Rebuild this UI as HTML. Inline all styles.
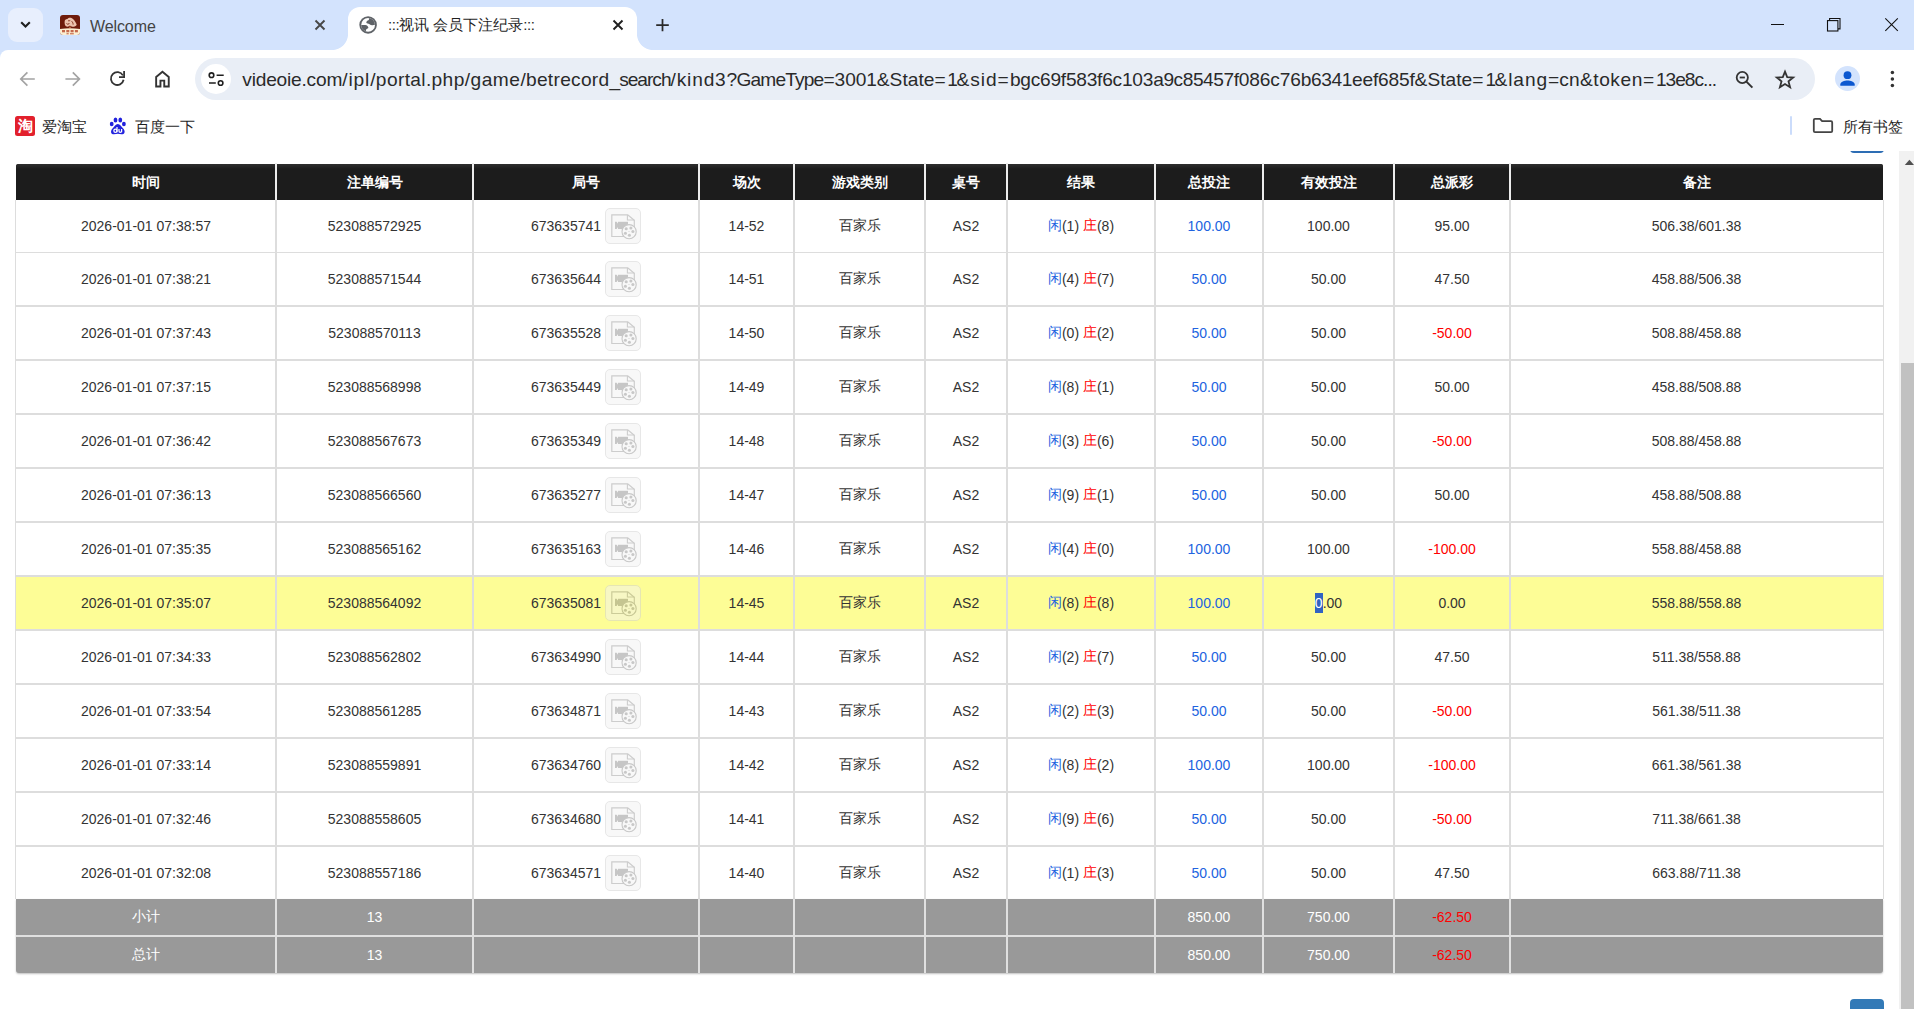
<!DOCTYPE html><html><head><meta charset="utf-8"><title>::视讯 会员下注纪录::</title><style>
*{box-sizing:border-box}
html,body{margin:0;padding:0}
body{width:1914px;height:1009px;position:relative;overflow:hidden;background:#fff;font-family:"Liberation Sans",sans-serif;color:#333}
.a{position:absolute}
.c{position:absolute;display:flex;align-items:center;justify-content:center;white-space:nowrap}
.hd{color:#fff;font-weight:bold;font-size:14px;padding-top:2px}
.td{font-size:14px;color:#333}
.bl{color:#2163e0}
.rd{color:#ff0000}
.ft{color:#fff;font-size:14px}
.vl{position:absolute;width:2px;background:#dddddd}
.hl{position:absolute;height:2px;background:#dddddd}
.vid{display:inline-block;width:36px;height:36px;border:1px solid #d0d0d0;border-radius:5px;background:#f2f2f2;opacity:.5;margin-left:4px;position:relative}
.vid svg{position:absolute;left:0;top:0}
</style></head><body>
<div class="a" style="left:0;top:0;width:1914px;height:151px;background:#fff;z-index:5"></div>
<div class="a" style="left:0;top:0;width:1914px;height:60px;background:#d3e3fd;z-index:5"></div>
<div class="a" style="left:0;top:50px;width:1914px;height:101px;background:#fff;border-top-left-radius:8px;z-index:5"></div>
<div id="chrome" style="position:absolute;left:0;top:0;width:1914px;height:151px;z-index:6">
<!-- tab search button -->
<div class="a" style="left:8px;top:8px;width:35px;height:34px;border-radius:9px;background:#e8effd"></div>
<svg class="a" style="left:8px;top:8px" width="35" height="34" viewBox="0 0 35 34"><path d="M13.2 14.2l4.3 4.3 4.3-4.3" fill="none" stroke="#1f1f1f" stroke-width="2.1"/></svg>
<!-- welcome tab -->
<svg class="a" style="left:60px;top:15px" width="20" height="20" viewBox="0 0 20 20"><defs><clipPath id="fc"><rect x="0" y="0" width="20" height="20" rx="3"/></clipPath></defs><g clip-path="url(#fc)"><rect width="20" height="20" fill="#6e1b0b"/><path d="M0 14Q10 12.6 20 14V20H0z" fill="#fcefd2"/><g fill="#c4694c"><rect x="2" y="15" width="3" height="2.3"/><rect x="6.3" y="15" width="3" height="2.3"/><rect x="10.6" y="15" width="3" height="2.3"/><rect x="14.9" y="15" width="3" height="2.3"/><rect x="6.5" y="18.2" width="2.2" height="1.1"/><rect x="10" y="18.2" width="3.8" height="1.1"/></g><path d="M4.6 7.2C4.4 5.2 6 4 7.4 4.1 8.3 2.6 10.2 2.3 11.5 3.1 13.5 4.2 15.6 6.8 16.7 9.6 16.3 11.2 14.6 12 13 11.7 11.7 12 10.6 11.3 10 10.6 9 11.6 7.2 12 6 11.2 4.8 10.4 4.6 8.6 4.6 7.2z" fill="#ecc2ad"/><path d="M6.5 8.5C7.5 9.8 9 9.2 9.4 8M8 5.5c.8.6 1.8.4 2.2-.3M11.6 6.2c1 .9 1.6 2.2 1.5 3.4" fill="none" stroke="#7a2612" stroke-width=".9"/><path d="M9.2 13.3L10 10.8 10.8 13.3z" fill="#e49a6c"/></g></svg>
<div class="a" style="left:90px;top:16.5px;font-size:16px;line-height:20px;color:#444;letter-spacing:-0.1px">Welcome</div>
<svg class="a" style="left:312px;top:17px" width="16" height="16" viewBox="0 0 16 16"><path d="M3.5 3.5l9 9M12.5 3.5l-9 9" stroke="#474747" stroke-width="1.9"/></svg>
<!-- active tab -->
<div class="a" style="left:348px;top:7px;width:289px;height:44px;background:#fff;border-radius:12px 12px 0 0"></div>
<div class="a" style="left:332px;top:34px;width:16px;height:16px;background:radial-gradient(circle at 0 0,#d3e3fd 15.6px,#fff 16.4px)"></div>
<div class="a" style="left:637px;top:34px;width:16px;height:16px;background:radial-gradient(circle at 100% 0,#d3e3fd 15.6px,#fff 16.4px)"></div>
<svg class="a" style="left:359px;top:16px" width="18" height="18" viewBox="0 0 18 18"><defs><clipPath id="gc"><circle cx="9.1" cy="8.9" r="6.9"/></clipPath></defs><circle cx="9.1" cy="8.9" r="8.75" fill="#5f6368"/><circle cx="9.1" cy="8.9" r="6.9" fill="#fff"/><g clip-path="url(#gc)" fill="#5f6368"><path d="M9.9 0V4C8.2 4.5 7.3 5.5 7.3 6.8 7.8 7.5 9.4 7.6 10.5 8.2 11.5 9 12.5 9.5 13.5 9.3L17 8.5V0z"/><path d="M0 8.9H6.3C8 9.1 9.4 10.5 9.4 12 8.3 12.5 7 13 6.9 14.6L7.1 18H0z"/></g></svg>
<div class="a" style="left:388px;top:14px;font-size:15px;line-height:22px;color:#1f1f1f;white-space:nowrap"><span style="letter-spacing:-0.45px">:::</span>视讯 会员下注纪录<span style="letter-spacing:-0.45px">:::</span></div>
<svg class="a" style="left:609.5px;top:17px" width="16" height="16" viewBox="0 0 16 16"><path d="M3.5 3.5l9 9M12.5 3.5l-9 9" stroke="#1f1f1f" stroke-width="1.9"/></svg>
<!-- new tab + -->
<svg class="a" style="left:652px;top:15px" width="20" height="20" viewBox="0 0 20 20"><path d="M10.5 4v12.3M4.2 10h12.6" stroke="#2a2a2a" stroke-width="1.75"/></svg>
<!-- window controls -->
<div class="a" style="left:1771px;top:24px;width:13px;height:1px;background:#111"></div>
<svg class="a" style="left:1825px;top:16px" width="18" height="18" viewBox="0 0 18 18"><path d="M4.6 4.5V2.5h10.4v10.4h-2" fill="none" stroke="#111" stroke-width="1.1"/><rect x="2.5" y="4.6" width="10.4" height="10.4" fill="none" stroke="#111" stroke-width="1.1"/></svg>
<svg class="a" style="left:1883px;top:16px" width="18" height="18" viewBox="0 0 18 18"><path d="M2.3 2.3l12.5 12.5M14.8 2.3l-12.5 12.5" stroke="#111" stroke-width="1.1"/></svg>
<!-- toolbar -->
<svg class="a" style="left:17px;top:68px" width="22" height="22" viewBox="0 0 22 22"><path d="M17.8 11H4.5M10.4 4.4L3.8 11l6.6 6.6" fill="none" stroke="#a3a3a3" stroke-width="1.7"/></svg>
<svg class="a" style="left:62px;top:68px" width="22" height="22" viewBox="0 0 22 22"><path d="M3.4 11h13.4M10.8 4.4l6.6 6.6-6.6 6.6" fill="none" stroke="#a3a3a3" stroke-width="1.7"/></svg>
<svg class="a" style="left:107px;top:68px" width="22" height="22" viewBox="0 0 22 22"><path d="M15.9 7.4A6.4 6.4 0 1 0 16.6 11.8" fill="none" stroke="#333" stroke-width="1.8"/><path d="M17.1 3.1V9.1H12" fill="none" stroke="#333" stroke-width="1.8" stroke-linejoin="miter"/></svg>
<svg class="a" style="left:152px;top:68px" width="22" height="22" viewBox="0 0 22 22"><path d="M4.15 18.45V8.9L10.45 3.8l6.3 5.1v9.55h-4.5V12.6H8.45v5.85z" fill="none" stroke="#333" stroke-width="1.9" stroke-linejoin="miter"/></svg>
<!-- omnibox -->
<div class="a" style="left:195px;top:58px;width:1620px;height:42px;border-radius:21px;background:#e9eef6"></div>
<div class="a" style="left:201px;top:64px;width:30px;height:30px;border-radius:15px;background:#fff"></div>
<svg class="a" style="left:206px;top:69px" width="20" height="20" viewBox="0 0 20 20"><circle cx="5.5" cy="6.2" r="2.3" fill="none" stroke="#1f1f1f" stroke-width="1.6"/><path d="M10.6 6.2h7.1M3 14h6.8" stroke="#1f1f1f" stroke-width="1.6"/><circle cx="14.6" cy="14" r="2.3" fill="none" stroke="#1f1f1f" stroke-width="1.6"/></svg>
<div class="a" style="left:0;top:68px;width:1914px;height:24px;font-size:19.15px;line-height:24px;color:#2a2a2a;white-space:nowrap"><span style="position:absolute;left:242.30px;letter-spacing:-0.208px">videoie.com</span><span style="position:absolute;left:342.20px;letter-spacing:0.880px">/ipl</span><span style="position:absolute;left:370.20px;letter-spacing:0.364px">/portal.php</span><span style="position:absolute;left:464.70px;letter-spacing:0.495px">/game</span><span style="position:absolute;left:520.40px;letter-spacing:0.288px">/betrecord</span><span style="position:absolute;left:609.51px;letter-spacing:-1.005px">_search</span><span style="position:absolute;left:670.60px;letter-spacing:0.816px">/kind3</span><span style="position:absolute;left:726.60px;letter-spacing:-0.824px">?GameType</span><span style="position:absolute;left:823.50px;letter-spacing:-0.097px">=3001</span><span style="position:absolute;left:876.80px;letter-spacing:0.035px">&amp;State</span><span style="position:absolute;left:934.50px;letter-spacing:1.617px">=</span><span style="position:absolute;left:947.30px;letter-spacing:-1.350px">1</span><span style="position:absolute;left:956.60px;letter-spacing:0.912px">&amp;sid</span><span style="position:absolute;left:997.50px;letter-spacing:1.217px">=</span><span style="position:absolute;left:1009.90px;letter-spacing:-0.243px">bgc69f583f6c103</span><span style="position:absolute;left:1153.20px;letter-spacing:-0.453px">a9c85457</span><span style="position:absolute;left:1233.70px;letter-spacing:-0.150px">f086c76</span><span style="position:absolute;left:1300.80px;letter-spacing:-0.410px">b6341</span><span style="position:absolute;left:1352.00px;letter-spacing:-0.185px">eef685f</span><span style="position:absolute;left:1414.60px;letter-spacing:0.035px">&amp;State</span><span style="position:absolute;left:1472.30px;letter-spacing:2.117px">=</span><span style="position:absolute;left:1485.60px;letter-spacing:-1.750px">1</span><span style="position:absolute;left:1494.50px;letter-spacing:0.904px">&amp;lang</span><span style="position:absolute;left:1548.00px;letter-spacing:0.164px">=cn</span><span style="position:absolute;left:1579.90px;letter-spacing:0.580px">&amp;token</span><span style="position:absolute;left:1643.00px;letter-spacing:1.717px">=</span><span style="position:absolute;left:1655.90px;letter-spacing:-0.991px">13e8c...</span></div>
<svg class="a" style="left:1733px;top:68px" width="22" height="22" viewBox="0 0 22 22"><circle cx="9.3" cy="9.5" r="5.6" fill="none" stroke="#333" stroke-width="1.8"/><path d="M6.7 9.5h5.2" stroke="#333" stroke-width="1.8"/><path d="M13.4 13.6l6 6" stroke="#333" stroke-width="2"/></svg>
<svg class="a" style="left:1774px;top:68px" width="22" height="22" viewBox="0 0 22 22"><path d="M11 3.6l2.2 5.6 6 .3-4.7 3.9 1.6 5.9L11 16l-5.1 3.3 1.6-5.9-4.7-3.9 6-.3z" fill="none" stroke="#333" stroke-width="1.8" stroke-linejoin="miter"/></svg>
<div class="a" style="left:1835px;top:65.5px;width:25px;height:25px;border-radius:50%;background:#d3e3fd"></div>
<svg class="a" style="left:1835px;top:65.5px" width="25" height="25" viewBox="0 0 25 25"><circle cx="12.5" cy="9.2" r="3.9" fill="#0b57d0"/><path d="M5.3 19.8v-1.3c0-2.6 4.3-4 7.2-4s7.2 1.4 7.2 4v1.3z" fill="#0b57d0"/></svg>
<svg class="a" style="left:1882px;top:68px" width="20" height="22" viewBox="0 0 20 22"><circle cx="10.4" cy="4.6" r="1.75" fill="#333"/><circle cx="10.4" cy="11.1" r="1.75" fill="#333"/><circle cx="10.4" cy="17.6" r="1.75" fill="#333"/></svg>
<!-- bookmarks bar -->
<div class="a" style="left:15px;top:116px;width:20px;height:20px;border-radius:2.5px;background:#e2202c;color:#fff;font-weight:bold;font-size:15px;line-height:20px;text-align:center;overflow:hidden">淘</div>
<div class="a" style="left:42px;top:117px;font-size:15px;line-height:20px;color:#1f1f1f">爱淘宝</div>
<svg class="a" style="left:108px;top:116px" width="20" height="20" viewBox="0 0 20 20"><g fill="#2222dd"><ellipse cx="7.5" cy="4" rx="1.9" ry="2.5"/><ellipse cx="12.3" cy="4" rx="1.9" ry="2.5"/><ellipse cx="3.7" cy="8" rx="1.9" ry="2.3"/><ellipse cx="15.9" cy="8" rx="1.9" ry="2.3"/><path d="M9.8 8C7.5 8 6.5 10.5 4.5 12.5 2.5 14.5 2.5 17.8 5 18.2 7 18.5 8.5 17.8 9.8 17.8 11.2 17.8 12.6 18.5 14.6 18.2 17.2 17.8 17.2 14.5 15.2 12.5 13.2 10.5 12.1 8 9.8 8z"/></g><g fill="none" stroke="#fff" stroke-width="1.25"><circle cx="7.4" cy="14.7" r="1.55"/><path d="M9 11v5.2M11 12.9v2c0 1 .6 1.4 1.3 1.4s1.3-.4 1.3-1.4v-2M13.6 12.9v3.3"/></g></svg>
<div class="a" style="left:135px;top:117px;font-size:15px;line-height:20px;color:#1f1f1f">百度一下</div>
<div class="a" style="left:1790px;top:116px;width:2px;height:19px;background:#cbdcfb;border-radius:1px"></div>
<svg class="a" style="left:1812px;top:116px" width="22" height="19" viewBox="0 0 22 19"><path d="M1.8 4.1c0-.7.5-1.2 1.2-1.2h5l2.1 2.3h8.9c.7 0 1.2.5 1.2 1.2v8.6c0 .7-.5 1.2-1.2 1.2H3c-.7 0-1.2-.5-1.2-1.2z" fill="none" stroke="#444" stroke-width="1.8"/></svg>
<div class="a" style="left:1843px;top:117px;font-size:15px;line-height:20px;color:#1f1f1f">所有书签</div>
</div>

<div class="a" style="left:16px;top:164px;width:1867px;height:36px;background:#1c1c1c;border-radius:3px 3px 0 0;"></div>
<div class="a" style="left:16px;top:164px;width:1867px;height:5px;background:linear-gradient(#2e2e2e,#1c1c1c);border-radius:2px 2px 0 0"></div>
<div class="c hd" style="left:16px;top:164px;width:260px;height:36px">时间</div>
<div class="c hd" style="left:276px;top:164px;width:197px;height:36px">注单编号</div>
<div class="c hd" style="left:473px;top:164px;width:226px;height:36px">局号</div>
<div class="c hd" style="left:699px;top:164px;width:95px;height:36px">场次</div>
<div class="c hd" style="left:794px;top:164px;width:131px;height:36px">游戏类别</div>
<div class="c hd" style="left:925px;top:164px;width:82px;height:36px">桌号</div>
<div class="c hd" style="left:1007px;top:164px;width:148px;height:36px">结果</div>
<div class="c hd" style="left:1155px;top:164px;width:108px;height:36px">总投注</div>
<div class="c hd" style="left:1263px;top:164px;width:131px;height:36px">有效投注</div>
<div class="c hd" style="left:1394px;top:164px;width:116px;height:36px">总派彩</div>
<div class="c hd" style="left:1510px;top:164px;width:373px;height:36px">备注</div>
<div class="vl" style="left:275px;top:163px;height:37px;background:#ececec"></div>
<div class="vl" style="left:472px;top:163px;height:37px;background:#ececec"></div>
<div class="vl" style="left:698px;top:163px;height:37px;background:#ececec"></div>
<div class="vl" style="left:793px;top:163px;height:37px;background:#ececec"></div>
<div class="vl" style="left:924px;top:163px;height:37px;background:#ececec"></div>
<div class="vl" style="left:1006px;top:163px;height:37px;background:#ececec"></div>
<div class="vl" style="left:1154px;top:163px;height:37px;background:#ececec"></div>
<div class="vl" style="left:1262px;top:163px;height:37px;background:#ececec"></div>
<div class="vl" style="left:1393px;top:163px;height:37px;background:#ececec"></div>
<div class="vl" style="left:1509px;top:163px;height:37px;background:#ececec"></div>
<div class="c td" style="left:16px;top:200px;width:260px;height:52px">2026-01-01 07:38:57</div>
<div class="c td" style="left:276px;top:200px;width:197px;height:52px">523088572925</div>
<div class="c td" style="left:473px;top:200px;width:226px;height:52px">673635741<span class="vid"><svg width="34" height="34" viewBox="0 0 34 34"><path d="M21.6 5.8H5.8v21.7h13M21.6 5.8l6.7 5.5v10" fill="none" stroke="#9c9c9c" stroke-width="1.2"/><path d="M21.4 5.8v5.2h6.9" fill="none" stroke="#9c9c9c" stroke-width="1.1"/><rect x="12" y="12.8" width="10" height="7.2" fill="#8e8e8e"/><path d="M9 12.8h1.6l1.6 2.3v2.6l-1.6 2.3H9z" fill="#8e8e8e"/><circle cx="23.1" cy="22.7" r="7.1" fill="#f2f2f2" stroke="#929292" stroke-width="1.1"/><g fill="#939393"><circle cx="20.2" cy="19.7" r="1.55"/><circle cx="24.9" cy="19" r="1.55"/><circle cx="26.9" cy="22.5" r="1.55"/><circle cx="19.4" cy="24.2" r="1.55"/><circle cx="23.4" cy="26.2" r="1.55"/><circle cx="23" cy="22.6" r=".5"/></g></svg></span></div>
<div class="c td" style="left:699px;top:200px;width:95px;height:52px">14-52</div>
<div class="c td" style="left:794px;top:200px;width:131px;height:52px">百家乐</div>
<div class="c td" style="left:925px;top:200px;width:82px;height:52px">AS2</div>
<div class="c td" style="left:1007px;top:200px;width:148px;height:52px"><span class="bl">闲</span>(1)&nbsp;<span class="rd">庄</span>(8)</div>
<div class="c td" style="left:1155px;top:200px;width:108px;height:52px"><span class="bl">100.00</span></div>
<div class="c td" style="left:1263px;top:200px;width:131px;height:52px">100.00</div>
<div class="c td" style="left:1394px;top:200px;width:116px;height:52px">95.00</div>
<div class="c td" style="left:1510px;top:200px;width:373px;height:52px">506.38/601.38</div>
<div class="c td" style="left:16px;top:252px;width:260px;height:54px">2026-01-01 07:38:21</div>
<div class="c td" style="left:276px;top:252px;width:197px;height:54px">523088571544</div>
<div class="c td" style="left:473px;top:252px;width:226px;height:54px">673635644<span class="vid"><svg width="34" height="34" viewBox="0 0 34 34"><path d="M21.6 5.8H5.8v21.7h13M21.6 5.8l6.7 5.5v10" fill="none" stroke="#9c9c9c" stroke-width="1.2"/><path d="M21.4 5.8v5.2h6.9" fill="none" stroke="#9c9c9c" stroke-width="1.1"/><rect x="12" y="12.8" width="10" height="7.2" fill="#8e8e8e"/><path d="M9 12.8h1.6l1.6 2.3v2.6l-1.6 2.3H9z" fill="#8e8e8e"/><circle cx="23.1" cy="22.7" r="7.1" fill="#f2f2f2" stroke="#929292" stroke-width="1.1"/><g fill="#939393"><circle cx="20.2" cy="19.7" r="1.55"/><circle cx="24.9" cy="19" r="1.55"/><circle cx="26.9" cy="22.5" r="1.55"/><circle cx="19.4" cy="24.2" r="1.55"/><circle cx="23.4" cy="26.2" r="1.55"/><circle cx="23" cy="22.6" r=".5"/></g></svg></span></div>
<div class="c td" style="left:699px;top:252px;width:95px;height:54px">14-51</div>
<div class="c td" style="left:794px;top:252px;width:131px;height:54px">百家乐</div>
<div class="c td" style="left:925px;top:252px;width:82px;height:54px">AS2</div>
<div class="c td" style="left:1007px;top:252px;width:148px;height:54px"><span class="bl">闲</span>(4)&nbsp;<span class="rd">庄</span>(7)</div>
<div class="c td" style="left:1155px;top:252px;width:108px;height:54px"><span class="bl">50.00</span></div>
<div class="c td" style="left:1263px;top:252px;width:131px;height:54px">50.00</div>
<div class="c td" style="left:1394px;top:252px;width:116px;height:54px">47.50</div>
<div class="c td" style="left:1510px;top:252px;width:373px;height:54px">458.88/506.38</div>
<div class="c td" style="left:16px;top:306px;width:260px;height:54px">2026-01-01 07:37:43</div>
<div class="c td" style="left:276px;top:306px;width:197px;height:54px">523088570113</div>
<div class="c td" style="left:473px;top:306px;width:226px;height:54px">673635528<span class="vid"><svg width="34" height="34" viewBox="0 0 34 34"><path d="M21.6 5.8H5.8v21.7h13M21.6 5.8l6.7 5.5v10" fill="none" stroke="#9c9c9c" stroke-width="1.2"/><path d="M21.4 5.8v5.2h6.9" fill="none" stroke="#9c9c9c" stroke-width="1.1"/><rect x="12" y="12.8" width="10" height="7.2" fill="#8e8e8e"/><path d="M9 12.8h1.6l1.6 2.3v2.6l-1.6 2.3H9z" fill="#8e8e8e"/><circle cx="23.1" cy="22.7" r="7.1" fill="#f2f2f2" stroke="#929292" stroke-width="1.1"/><g fill="#939393"><circle cx="20.2" cy="19.7" r="1.55"/><circle cx="24.9" cy="19" r="1.55"/><circle cx="26.9" cy="22.5" r="1.55"/><circle cx="19.4" cy="24.2" r="1.55"/><circle cx="23.4" cy="26.2" r="1.55"/><circle cx="23" cy="22.6" r=".5"/></g></svg></span></div>
<div class="c td" style="left:699px;top:306px;width:95px;height:54px">14-50</div>
<div class="c td" style="left:794px;top:306px;width:131px;height:54px">百家乐</div>
<div class="c td" style="left:925px;top:306px;width:82px;height:54px">AS2</div>
<div class="c td" style="left:1007px;top:306px;width:148px;height:54px"><span class="bl">闲</span>(0)&nbsp;<span class="rd">庄</span>(2)</div>
<div class="c td" style="left:1155px;top:306px;width:108px;height:54px"><span class="bl">50.00</span></div>
<div class="c td" style="left:1263px;top:306px;width:131px;height:54px">50.00</div>
<div class="c td" style="left:1394px;top:306px;width:116px;height:54px"><span class="rd">-50.00</span></div>
<div class="c td" style="left:1510px;top:306px;width:373px;height:54px">508.88/458.88</div>
<div class="c td" style="left:16px;top:360px;width:260px;height:54px">2026-01-01 07:37:15</div>
<div class="c td" style="left:276px;top:360px;width:197px;height:54px">523088568998</div>
<div class="c td" style="left:473px;top:360px;width:226px;height:54px">673635449<span class="vid"><svg width="34" height="34" viewBox="0 0 34 34"><path d="M21.6 5.8H5.8v21.7h13M21.6 5.8l6.7 5.5v10" fill="none" stroke="#9c9c9c" stroke-width="1.2"/><path d="M21.4 5.8v5.2h6.9" fill="none" stroke="#9c9c9c" stroke-width="1.1"/><rect x="12" y="12.8" width="10" height="7.2" fill="#8e8e8e"/><path d="M9 12.8h1.6l1.6 2.3v2.6l-1.6 2.3H9z" fill="#8e8e8e"/><circle cx="23.1" cy="22.7" r="7.1" fill="#f2f2f2" stroke="#929292" stroke-width="1.1"/><g fill="#939393"><circle cx="20.2" cy="19.7" r="1.55"/><circle cx="24.9" cy="19" r="1.55"/><circle cx="26.9" cy="22.5" r="1.55"/><circle cx="19.4" cy="24.2" r="1.55"/><circle cx="23.4" cy="26.2" r="1.55"/><circle cx="23" cy="22.6" r=".5"/></g></svg></span></div>
<div class="c td" style="left:699px;top:360px;width:95px;height:54px">14-49</div>
<div class="c td" style="left:794px;top:360px;width:131px;height:54px">百家乐</div>
<div class="c td" style="left:925px;top:360px;width:82px;height:54px">AS2</div>
<div class="c td" style="left:1007px;top:360px;width:148px;height:54px"><span class="bl">闲</span>(8)&nbsp;<span class="rd">庄</span>(1)</div>
<div class="c td" style="left:1155px;top:360px;width:108px;height:54px"><span class="bl">50.00</span></div>
<div class="c td" style="left:1263px;top:360px;width:131px;height:54px">50.00</div>
<div class="c td" style="left:1394px;top:360px;width:116px;height:54px">50.00</div>
<div class="c td" style="left:1510px;top:360px;width:373px;height:54px">458.88/508.88</div>
<div class="c td" style="left:16px;top:414px;width:260px;height:54px">2026-01-01 07:36:42</div>
<div class="c td" style="left:276px;top:414px;width:197px;height:54px">523088567673</div>
<div class="c td" style="left:473px;top:414px;width:226px;height:54px">673635349<span class="vid"><svg width="34" height="34" viewBox="0 0 34 34"><path d="M21.6 5.8H5.8v21.7h13M21.6 5.8l6.7 5.5v10" fill="none" stroke="#9c9c9c" stroke-width="1.2"/><path d="M21.4 5.8v5.2h6.9" fill="none" stroke="#9c9c9c" stroke-width="1.1"/><rect x="12" y="12.8" width="10" height="7.2" fill="#8e8e8e"/><path d="M9 12.8h1.6l1.6 2.3v2.6l-1.6 2.3H9z" fill="#8e8e8e"/><circle cx="23.1" cy="22.7" r="7.1" fill="#f2f2f2" stroke="#929292" stroke-width="1.1"/><g fill="#939393"><circle cx="20.2" cy="19.7" r="1.55"/><circle cx="24.9" cy="19" r="1.55"/><circle cx="26.9" cy="22.5" r="1.55"/><circle cx="19.4" cy="24.2" r="1.55"/><circle cx="23.4" cy="26.2" r="1.55"/><circle cx="23" cy="22.6" r=".5"/></g></svg></span></div>
<div class="c td" style="left:699px;top:414px;width:95px;height:54px">14-48</div>
<div class="c td" style="left:794px;top:414px;width:131px;height:54px">百家乐</div>
<div class="c td" style="left:925px;top:414px;width:82px;height:54px">AS2</div>
<div class="c td" style="left:1007px;top:414px;width:148px;height:54px"><span class="bl">闲</span>(3)&nbsp;<span class="rd">庄</span>(6)</div>
<div class="c td" style="left:1155px;top:414px;width:108px;height:54px"><span class="bl">50.00</span></div>
<div class="c td" style="left:1263px;top:414px;width:131px;height:54px">50.00</div>
<div class="c td" style="left:1394px;top:414px;width:116px;height:54px"><span class="rd">-50.00</span></div>
<div class="c td" style="left:1510px;top:414px;width:373px;height:54px">508.88/458.88</div>
<div class="c td" style="left:16px;top:468px;width:260px;height:54px">2026-01-01 07:36:13</div>
<div class="c td" style="left:276px;top:468px;width:197px;height:54px">523088566560</div>
<div class="c td" style="left:473px;top:468px;width:226px;height:54px">673635277<span class="vid"><svg width="34" height="34" viewBox="0 0 34 34"><path d="M21.6 5.8H5.8v21.7h13M21.6 5.8l6.7 5.5v10" fill="none" stroke="#9c9c9c" stroke-width="1.2"/><path d="M21.4 5.8v5.2h6.9" fill="none" stroke="#9c9c9c" stroke-width="1.1"/><rect x="12" y="12.8" width="10" height="7.2" fill="#8e8e8e"/><path d="M9 12.8h1.6l1.6 2.3v2.6l-1.6 2.3H9z" fill="#8e8e8e"/><circle cx="23.1" cy="22.7" r="7.1" fill="#f2f2f2" stroke="#929292" stroke-width="1.1"/><g fill="#939393"><circle cx="20.2" cy="19.7" r="1.55"/><circle cx="24.9" cy="19" r="1.55"/><circle cx="26.9" cy="22.5" r="1.55"/><circle cx="19.4" cy="24.2" r="1.55"/><circle cx="23.4" cy="26.2" r="1.55"/><circle cx="23" cy="22.6" r=".5"/></g></svg></span></div>
<div class="c td" style="left:699px;top:468px;width:95px;height:54px">14-47</div>
<div class="c td" style="left:794px;top:468px;width:131px;height:54px">百家乐</div>
<div class="c td" style="left:925px;top:468px;width:82px;height:54px">AS2</div>
<div class="c td" style="left:1007px;top:468px;width:148px;height:54px"><span class="bl">闲</span>(9)&nbsp;<span class="rd">庄</span>(1)</div>
<div class="c td" style="left:1155px;top:468px;width:108px;height:54px"><span class="bl">50.00</span></div>
<div class="c td" style="left:1263px;top:468px;width:131px;height:54px">50.00</div>
<div class="c td" style="left:1394px;top:468px;width:116px;height:54px">50.00</div>
<div class="c td" style="left:1510px;top:468px;width:373px;height:54px">458.88/508.88</div>
<div class="c td" style="left:16px;top:522px;width:260px;height:54px">2026-01-01 07:35:35</div>
<div class="c td" style="left:276px;top:522px;width:197px;height:54px">523088565162</div>
<div class="c td" style="left:473px;top:522px;width:226px;height:54px">673635163<span class="vid"><svg width="34" height="34" viewBox="0 0 34 34"><path d="M21.6 5.8H5.8v21.7h13M21.6 5.8l6.7 5.5v10" fill="none" stroke="#9c9c9c" stroke-width="1.2"/><path d="M21.4 5.8v5.2h6.9" fill="none" stroke="#9c9c9c" stroke-width="1.1"/><rect x="12" y="12.8" width="10" height="7.2" fill="#8e8e8e"/><path d="M9 12.8h1.6l1.6 2.3v2.6l-1.6 2.3H9z" fill="#8e8e8e"/><circle cx="23.1" cy="22.7" r="7.1" fill="#f2f2f2" stroke="#929292" stroke-width="1.1"/><g fill="#939393"><circle cx="20.2" cy="19.7" r="1.55"/><circle cx="24.9" cy="19" r="1.55"/><circle cx="26.9" cy="22.5" r="1.55"/><circle cx="19.4" cy="24.2" r="1.55"/><circle cx="23.4" cy="26.2" r="1.55"/><circle cx="23" cy="22.6" r=".5"/></g></svg></span></div>
<div class="c td" style="left:699px;top:522px;width:95px;height:54px">14-46</div>
<div class="c td" style="left:794px;top:522px;width:131px;height:54px">百家乐</div>
<div class="c td" style="left:925px;top:522px;width:82px;height:54px">AS2</div>
<div class="c td" style="left:1007px;top:522px;width:148px;height:54px"><span class="bl">闲</span>(4)&nbsp;<span class="rd">庄</span>(0)</div>
<div class="c td" style="left:1155px;top:522px;width:108px;height:54px"><span class="bl">100.00</span></div>
<div class="c td" style="left:1263px;top:522px;width:131px;height:54px">100.00</div>
<div class="c td" style="left:1394px;top:522px;width:116px;height:54px"><span class="rd">-100.00</span></div>
<div class="c td" style="left:1510px;top:522px;width:373px;height:54px">558.88/458.88</div>
<div class="a" style="left:16px;top:576px;width:1867px;height:54px;background:#fdfd96"></div>
<div class="c td" style="left:16px;top:576px;width:260px;height:54px">2026-01-01 07:35:07</div>
<div class="c td" style="left:276px;top:576px;width:197px;height:54px">523088564092</div>
<div class="c td" style="left:473px;top:576px;width:226px;height:54px">673635081<span class="vid"><svg width="34" height="34" viewBox="0 0 34 34"><path d="M21.6 5.8H5.8v21.7h13M21.6 5.8l6.7 5.5v10" fill="none" stroke="#9c9c9c" stroke-width="1.2"/><path d="M21.4 5.8v5.2h6.9" fill="none" stroke="#9c9c9c" stroke-width="1.1"/><rect x="12" y="12.8" width="10" height="7.2" fill="#8e8e8e"/><path d="M9 12.8h1.6l1.6 2.3v2.6l-1.6 2.3H9z" fill="#8e8e8e"/><circle cx="23.1" cy="22.7" r="7.1" fill="#f2f2f2" stroke="#929292" stroke-width="1.1"/><g fill="#939393"><circle cx="20.2" cy="19.7" r="1.55"/><circle cx="24.9" cy="19" r="1.55"/><circle cx="26.9" cy="22.5" r="1.55"/><circle cx="19.4" cy="24.2" r="1.55"/><circle cx="23.4" cy="26.2" r="1.55"/><circle cx="23" cy="22.6" r=".5"/></g></svg></span></div>
<div class="c td" style="left:699px;top:576px;width:95px;height:54px">14-45</div>
<div class="c td" style="left:794px;top:576px;width:131px;height:54px">百家乐</div>
<div class="c td" style="left:925px;top:576px;width:82px;height:54px">AS2</div>
<div class="c td" style="left:1007px;top:576px;width:148px;height:54px"><span class="bl">闲</span>(8)&nbsp;<span class="rd">庄</span>(8)</div>
<div class="c td" style="left:1155px;top:576px;width:108px;height:54px"><span class="bl">100.00</span></div>
<div class="c td" style="left:1263px;top:576px;width:131px;height:54px"><span style="background:#3163c2;color:#fff;padding:2px 0">0</span>.00</div>
<div class="c td" style="left:1394px;top:576px;width:116px;height:54px">0.00</div>
<div class="c td" style="left:1510px;top:576px;width:373px;height:54px">558.88/558.88</div>
<div class="c td" style="left:16px;top:630px;width:260px;height:54px">2026-01-01 07:34:33</div>
<div class="c td" style="left:276px;top:630px;width:197px;height:54px">523088562802</div>
<div class="c td" style="left:473px;top:630px;width:226px;height:54px">673634990<span class="vid"><svg width="34" height="34" viewBox="0 0 34 34"><path d="M21.6 5.8H5.8v21.7h13M21.6 5.8l6.7 5.5v10" fill="none" stroke="#9c9c9c" stroke-width="1.2"/><path d="M21.4 5.8v5.2h6.9" fill="none" stroke="#9c9c9c" stroke-width="1.1"/><rect x="12" y="12.8" width="10" height="7.2" fill="#8e8e8e"/><path d="M9 12.8h1.6l1.6 2.3v2.6l-1.6 2.3H9z" fill="#8e8e8e"/><circle cx="23.1" cy="22.7" r="7.1" fill="#f2f2f2" stroke="#929292" stroke-width="1.1"/><g fill="#939393"><circle cx="20.2" cy="19.7" r="1.55"/><circle cx="24.9" cy="19" r="1.55"/><circle cx="26.9" cy="22.5" r="1.55"/><circle cx="19.4" cy="24.2" r="1.55"/><circle cx="23.4" cy="26.2" r="1.55"/><circle cx="23" cy="22.6" r=".5"/></g></svg></span></div>
<div class="c td" style="left:699px;top:630px;width:95px;height:54px">14-44</div>
<div class="c td" style="left:794px;top:630px;width:131px;height:54px">百家乐</div>
<div class="c td" style="left:925px;top:630px;width:82px;height:54px">AS2</div>
<div class="c td" style="left:1007px;top:630px;width:148px;height:54px"><span class="bl">闲</span>(2)&nbsp;<span class="rd">庄</span>(7)</div>
<div class="c td" style="left:1155px;top:630px;width:108px;height:54px"><span class="bl">50.00</span></div>
<div class="c td" style="left:1263px;top:630px;width:131px;height:54px">50.00</div>
<div class="c td" style="left:1394px;top:630px;width:116px;height:54px">47.50</div>
<div class="c td" style="left:1510px;top:630px;width:373px;height:54px">511.38/558.88</div>
<div class="c td" style="left:16px;top:684px;width:260px;height:54px">2026-01-01 07:33:54</div>
<div class="c td" style="left:276px;top:684px;width:197px;height:54px">523088561285</div>
<div class="c td" style="left:473px;top:684px;width:226px;height:54px">673634871<span class="vid"><svg width="34" height="34" viewBox="0 0 34 34"><path d="M21.6 5.8H5.8v21.7h13M21.6 5.8l6.7 5.5v10" fill="none" stroke="#9c9c9c" stroke-width="1.2"/><path d="M21.4 5.8v5.2h6.9" fill="none" stroke="#9c9c9c" stroke-width="1.1"/><rect x="12" y="12.8" width="10" height="7.2" fill="#8e8e8e"/><path d="M9 12.8h1.6l1.6 2.3v2.6l-1.6 2.3H9z" fill="#8e8e8e"/><circle cx="23.1" cy="22.7" r="7.1" fill="#f2f2f2" stroke="#929292" stroke-width="1.1"/><g fill="#939393"><circle cx="20.2" cy="19.7" r="1.55"/><circle cx="24.9" cy="19" r="1.55"/><circle cx="26.9" cy="22.5" r="1.55"/><circle cx="19.4" cy="24.2" r="1.55"/><circle cx="23.4" cy="26.2" r="1.55"/><circle cx="23" cy="22.6" r=".5"/></g></svg></span></div>
<div class="c td" style="left:699px;top:684px;width:95px;height:54px">14-43</div>
<div class="c td" style="left:794px;top:684px;width:131px;height:54px">百家乐</div>
<div class="c td" style="left:925px;top:684px;width:82px;height:54px">AS2</div>
<div class="c td" style="left:1007px;top:684px;width:148px;height:54px"><span class="bl">闲</span>(2)&nbsp;<span class="rd">庄</span>(3)</div>
<div class="c td" style="left:1155px;top:684px;width:108px;height:54px"><span class="bl">50.00</span></div>
<div class="c td" style="left:1263px;top:684px;width:131px;height:54px">50.00</div>
<div class="c td" style="left:1394px;top:684px;width:116px;height:54px"><span class="rd">-50.00</span></div>
<div class="c td" style="left:1510px;top:684px;width:373px;height:54px">561.38/511.38</div>
<div class="c td" style="left:16px;top:738px;width:260px;height:54px">2026-01-01 07:33:14</div>
<div class="c td" style="left:276px;top:738px;width:197px;height:54px">523088559891</div>
<div class="c td" style="left:473px;top:738px;width:226px;height:54px">673634760<span class="vid"><svg width="34" height="34" viewBox="0 0 34 34"><path d="M21.6 5.8H5.8v21.7h13M21.6 5.8l6.7 5.5v10" fill="none" stroke="#9c9c9c" stroke-width="1.2"/><path d="M21.4 5.8v5.2h6.9" fill="none" stroke="#9c9c9c" stroke-width="1.1"/><rect x="12" y="12.8" width="10" height="7.2" fill="#8e8e8e"/><path d="M9 12.8h1.6l1.6 2.3v2.6l-1.6 2.3H9z" fill="#8e8e8e"/><circle cx="23.1" cy="22.7" r="7.1" fill="#f2f2f2" stroke="#929292" stroke-width="1.1"/><g fill="#939393"><circle cx="20.2" cy="19.7" r="1.55"/><circle cx="24.9" cy="19" r="1.55"/><circle cx="26.9" cy="22.5" r="1.55"/><circle cx="19.4" cy="24.2" r="1.55"/><circle cx="23.4" cy="26.2" r="1.55"/><circle cx="23" cy="22.6" r=".5"/></g></svg></span></div>
<div class="c td" style="left:699px;top:738px;width:95px;height:54px">14-42</div>
<div class="c td" style="left:794px;top:738px;width:131px;height:54px">百家乐</div>
<div class="c td" style="left:925px;top:738px;width:82px;height:54px">AS2</div>
<div class="c td" style="left:1007px;top:738px;width:148px;height:54px"><span class="bl">闲</span>(8)&nbsp;<span class="rd">庄</span>(2)</div>
<div class="c td" style="left:1155px;top:738px;width:108px;height:54px"><span class="bl">100.00</span></div>
<div class="c td" style="left:1263px;top:738px;width:131px;height:54px">100.00</div>
<div class="c td" style="left:1394px;top:738px;width:116px;height:54px"><span class="rd">-100.00</span></div>
<div class="c td" style="left:1510px;top:738px;width:373px;height:54px">661.38/561.38</div>
<div class="c td" style="left:16px;top:792px;width:260px;height:54px">2026-01-01 07:32:46</div>
<div class="c td" style="left:276px;top:792px;width:197px;height:54px">523088558605</div>
<div class="c td" style="left:473px;top:792px;width:226px;height:54px">673634680<span class="vid"><svg width="34" height="34" viewBox="0 0 34 34"><path d="M21.6 5.8H5.8v21.7h13M21.6 5.8l6.7 5.5v10" fill="none" stroke="#9c9c9c" stroke-width="1.2"/><path d="M21.4 5.8v5.2h6.9" fill="none" stroke="#9c9c9c" stroke-width="1.1"/><rect x="12" y="12.8" width="10" height="7.2" fill="#8e8e8e"/><path d="M9 12.8h1.6l1.6 2.3v2.6l-1.6 2.3H9z" fill="#8e8e8e"/><circle cx="23.1" cy="22.7" r="7.1" fill="#f2f2f2" stroke="#929292" stroke-width="1.1"/><g fill="#939393"><circle cx="20.2" cy="19.7" r="1.55"/><circle cx="24.9" cy="19" r="1.55"/><circle cx="26.9" cy="22.5" r="1.55"/><circle cx="19.4" cy="24.2" r="1.55"/><circle cx="23.4" cy="26.2" r="1.55"/><circle cx="23" cy="22.6" r=".5"/></g></svg></span></div>
<div class="c td" style="left:699px;top:792px;width:95px;height:54px">14-41</div>
<div class="c td" style="left:794px;top:792px;width:131px;height:54px">百家乐</div>
<div class="c td" style="left:925px;top:792px;width:82px;height:54px">AS2</div>
<div class="c td" style="left:1007px;top:792px;width:148px;height:54px"><span class="bl">闲</span>(9)&nbsp;<span class="rd">庄</span>(6)</div>
<div class="c td" style="left:1155px;top:792px;width:108px;height:54px"><span class="bl">50.00</span></div>
<div class="c td" style="left:1263px;top:792px;width:131px;height:54px">50.00</div>
<div class="c td" style="left:1394px;top:792px;width:116px;height:54px"><span class="rd">-50.00</span></div>
<div class="c td" style="left:1510px;top:792px;width:373px;height:54px">711.38/661.38</div>
<div class="c td" style="left:16px;top:846px;width:260px;height:53px">2026-01-01 07:32:08</div>
<div class="c td" style="left:276px;top:846px;width:197px;height:53px">523088557186</div>
<div class="c td" style="left:473px;top:846px;width:226px;height:53px">673634571<span class="vid"><svg width="34" height="34" viewBox="0 0 34 34"><path d="M21.6 5.8H5.8v21.7h13M21.6 5.8l6.7 5.5v10" fill="none" stroke="#9c9c9c" stroke-width="1.2"/><path d="M21.4 5.8v5.2h6.9" fill="none" stroke="#9c9c9c" stroke-width="1.1"/><rect x="12" y="12.8" width="10" height="7.2" fill="#8e8e8e"/><path d="M9 12.8h1.6l1.6 2.3v2.6l-1.6 2.3H9z" fill="#8e8e8e"/><circle cx="23.1" cy="22.7" r="7.1" fill="#f2f2f2" stroke="#929292" stroke-width="1.1"/><g fill="#939393"><circle cx="20.2" cy="19.7" r="1.55"/><circle cx="24.9" cy="19" r="1.55"/><circle cx="26.9" cy="22.5" r="1.55"/><circle cx="19.4" cy="24.2" r="1.55"/><circle cx="23.4" cy="26.2" r="1.55"/><circle cx="23" cy="22.6" r=".5"/></g></svg></span></div>
<div class="c td" style="left:699px;top:846px;width:95px;height:53px">14-40</div>
<div class="c td" style="left:794px;top:846px;width:131px;height:53px">百家乐</div>
<div class="c td" style="left:925px;top:846px;width:82px;height:53px">AS2</div>
<div class="c td" style="left:1007px;top:846px;width:148px;height:53px"><span class="bl">闲</span>(1)&nbsp;<span class="rd">庄</span>(3)</div>
<div class="c td" style="left:1155px;top:846px;width:108px;height:53px"><span class="bl">50.00</span></div>
<div class="c td" style="left:1263px;top:846px;width:131px;height:53px">50.00</div>
<div class="c td" style="left:1394px;top:846px;width:116px;height:53px">47.50</div>
<div class="c td" style="left:1510px;top:846px;width:373px;height:53px">663.88/711.38</div>
<div class="hl" style="left:16px;top:252px;height:1px;width:1867px"></div>
<div class="hl" style="left:16px;top:305px;width:1867px"></div>
<div class="hl" style="left:16px;top:359px;width:1867px"></div>
<div class="hl" style="left:16px;top:413px;width:1867px"></div>
<div class="hl" style="left:16px;top:467px;width:1867px"></div>
<div class="hl" style="left:16px;top:521px;width:1867px"></div>
<div class="hl" style="left:16px;top:575px;width:1867px"></div>
<div class="hl" style="left:16px;top:629px;width:1867px"></div>
<div class="hl" style="left:16px;top:683px;width:1867px"></div>
<div class="hl" style="left:16px;top:737px;width:1867px"></div>
<div class="hl" style="left:16px;top:791px;width:1867px"></div>
<div class="hl" style="left:16px;top:845px;width:1867px"></div>
<div class="vl" style="left:275px;top:200px;height:699px"></div>
<div class="vl" style="left:472px;top:200px;height:699px"></div>
<div class="vl" style="left:698px;top:200px;height:699px"></div>
<div class="vl" style="left:793px;top:200px;height:699px"></div>
<div class="vl" style="left:924px;top:200px;height:699px"></div>
<div class="vl" style="left:1006px;top:200px;height:699px"></div>
<div class="vl" style="left:1154px;top:200px;height:699px"></div>
<div class="vl" style="left:1262px;top:200px;height:699px"></div>
<div class="vl" style="left:1393px;top:200px;height:699px"></div>
<div class="vl" style="left:1509px;top:200px;height:699px"></div>
<div class="a" style="left:15px;top:200px;width:1px;height:699px;background:#dddddd"></div>
<div class="a" style="left:1883px;top:200px;width:1px;height:699px;background:#dddddd"></div>
<div class="a" style="left:16px;top:899px;width:1867px;height:74px;background:#999;border-radius:0 0 3px 3px;box-shadow:0 1px 2px rgba(0,0,0,.25)"></div>
<div class="hl" style="left:16px;top:935px;width:1867px;background:#e0e0e0"></div>
<div class="vl" style="left:275px;top:899px;height:74px;background:#e0e0e0"></div>
<div class="vl" style="left:472px;top:899px;height:74px;background:#e0e0e0"></div>
<div class="vl" style="left:698px;top:899px;height:74px;background:#e0e0e0"></div>
<div class="vl" style="left:793px;top:899px;height:74px;background:#e0e0e0"></div>
<div class="vl" style="left:924px;top:899px;height:74px;background:#e0e0e0"></div>
<div class="vl" style="left:1006px;top:899px;height:74px;background:#e0e0e0"></div>
<div class="vl" style="left:1154px;top:899px;height:74px;background:#e0e0e0"></div>
<div class="vl" style="left:1262px;top:899px;height:74px;background:#e0e0e0"></div>
<div class="vl" style="left:1393px;top:899px;height:74px;background:#e0e0e0"></div>
<div class="vl" style="left:1509px;top:899px;height:74px;background:#e0e0e0"></div>
<div class="c ft" style="left:16px;top:899px;width:260px;height:36px"><span class="">小计</span></div>
<div class="c ft" style="left:276px;top:899px;width:197px;height:36px"><span class="">13</span></div>
<div class="c ft" style="left:1155px;top:899px;width:108px;height:36px"><span class="">850.00</span></div>
<div class="c ft" style="left:1263px;top:899px;width:131px;height:36px"><span class="">750.00</span></div>
<div class="c ft" style="left:1394px;top:899px;width:116px;height:36px"><span class="rd">-62.50</span></div>
<div class="c ft" style="left:16px;top:937px;width:260px;height:36px"><span class="">总计</span></div>
<div class="c ft" style="left:276px;top:937px;width:197px;height:36px"><span class="">13</span></div>
<div class="c ft" style="left:1155px;top:937px;width:108px;height:36px"><span class="">850.00</span></div>
<div class="c ft" style="left:1263px;top:937px;width:131px;height:36px"><span class="">750.00</span></div>
<div class="c ft" style="left:1394px;top:937px;width:116px;height:36px"><span class="rd">-62.50</span></div>
<div class="a" style="left:1850px;top:120px;width:34px;height:33px;background:#2d6db4;border-radius:4px"></div>
<div class="a" style="left:1850px;top:999px;width:34px;height:30px;background:#337ab7;border-radius:4px"></div>
<div class="a" style="left:1899px;top:151px;width:15px;height:858px;background:#f1f1f1"></div>
<div class="a" style="left:1901px;top:363px;width:13px;height:660px;background:#c1c1c1"></div>
<svg class="a" style="left:1899px;top:151px;z-index:7" width="15" height="17"><path d="M5.8 14h9.2l-4.6-5.3z" fill="#505050"/></svg>
</body></html>
